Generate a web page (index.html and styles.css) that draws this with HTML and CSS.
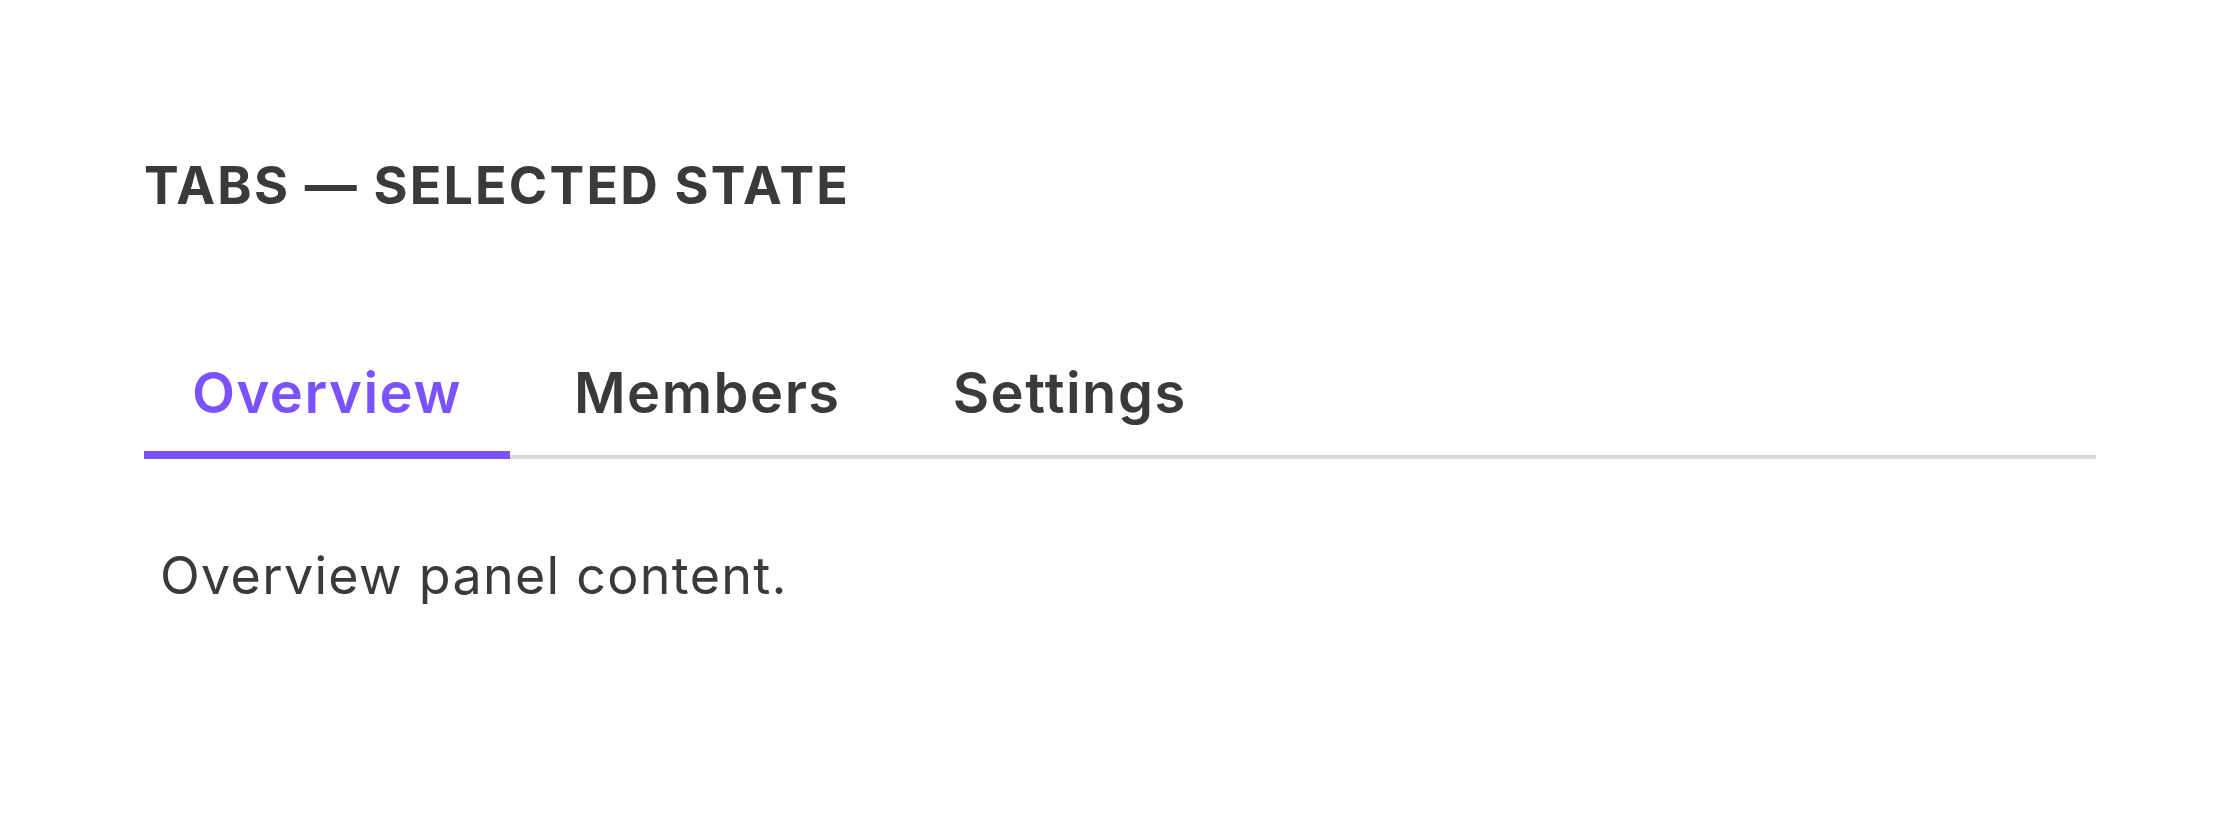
FILE: index.html
```html
<!DOCTYPE html>
<html lang="en">
<head>
  <meta charset="UTF-8" />
  <meta name="viewport" content="width=device-width, initial-scale=1.0" />
  <title>Tabs</title>
  <link rel="stylesheet" href="styles.css">
</head>

<body>

  <div class="page">
    <h2 class="section-title">Tabs — Selected state</h2>

    <div class="tabs" role="tablist">
      <button class="tab active" role="tab" aria-selected="true">Overview</button>
      <button class="tab" role="tab" aria-selected="false">Members</button>
      <button class="tab" role="tab" aria-selected="false">Settings</button>
    </div>

    <div class="tab-panel" role="tabpanel">
      Overview panel content.
    </div>
  </div>

</body>
</html>
```

FILE: styles.css
```css
body {
  margin: 0;
  padding: 0;
  background: #fff;
  font-family: 'Inter', 'Noto Sans', sans-serif;
  color: #3a3a3a;
}

.page {
  padding: 154px 144px 0;
}

.section-title {
  margin: 0 0 117px;
  font-size: 52px;
  line-height: 64px;
  font-weight: 700;
  text-transform: uppercase;
  letter-spacing: 2.2px;
}

.tabs {
  display: flex;
  gap: 16px;
  border-bottom: 4px solid #d9d9d9;
}

.tab {
  margin-bottom: -4px;
  padding: 24px 48px;
  border: none;
  border-bottom: 8px solid transparent;
  background: none;
  font-family: inherit;
  font-size: 56px;
  line-height: 68px;
  font-weight: 600;
  letter-spacing: 1.5px;
  color: #3a3a3a;
  cursor: pointer;
}

.tab.active {
  color: #7c52ff;
  border-bottom-color: #7c52ff;
}

.tab-panel {
  margin-top: 79px;
  padding: 0 16px;
  font-size: 52px;
  line-height: 76px;
  letter-spacing: 1.3px;
}
```
